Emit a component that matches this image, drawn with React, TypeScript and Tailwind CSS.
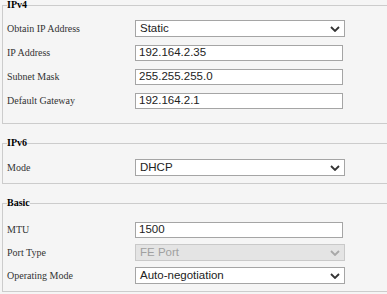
import React from "react";

const Chevron = ({ color }: { color: string }) => (
  <svg width="10" height="6" viewBox="0 0 10 6" className="shrink-0">
    <polyline points="1,1 5,5 9,1" fill="none" stroke={color} strokeWidth="1.8" />
  </svg>
);

const Label = ({ children }: { children: React.ReactNode }) => (
  <div className="w-[128px] shrink-0 text-[10px] text-[#333333] font-['Liberation_Serif',serif] leading-none">
    {children}
  </div>
);

const Select = ({ value, disabled }: { value: string; disabled?: boolean }) => (
  <div
    className={
      disabled
        ? "h-[17px] w-[210px] border border-[#c9c9c9] bg-[#e4e4e4] flex items-center justify-between pl-[4px] pr-[4px] text-[11.5px] text-[#a0a0a0] font-['Liberation_Sans',sans-serif]"
        : "h-[17px] w-[210px] border border-[#a5a5a5] bg-white flex items-center justify-between pl-[4px] pr-[4px] text-[11.5px] text-[#222222] font-['Liberation_Sans',sans-serif]"
    }
  >
    <span className="leading-none">{value}</span>
    <Chevron color={disabled ? "#a8a8a8" : "#333333"} />
  </div>
);

const Input = ({ value }: { value: string }) => (
  <div className="h-[16px] w-[208px] border border-[#a5a5a5] bg-white flex items-center pl-[3px] text-[11.5px] text-[#222222] font-['Liberation_Sans',sans-serif]">
    <span className="leading-none">{value}</span>
  </div>
);

const Row = ({ label, children }: { label: string; children: React.ReactNode }) => (
  <div className="flex items-center h-[17px]">
    <Label>{label}</Label>
    {children}
  </div>
);

const Legend = ({ children }: { children: React.ReactNode }) => (
  <legend className="text-[10px] leading-[10px] font-bold text-black font-['Liberation_Serif',serif]">
    {children}
  </legend>
);

export default function App() {
  return (
    <div className="w-[387px] h-[294px] overflow-hidden bg-[#f5f5f5]">
      <fieldset className="ml-[2px] w-[420px] border border-[#cccccc] pl-[4px]">
        <Legend>IPv4</Legend>
        <div className="flex flex-col gap-[7px] pt-[10px] pb-[14px]">
          <Row label="Obtain IP Address">
            <Select value="Static" />
          </Row>
          <Row label="IP Address">
            <Input value="192.164.2.35" />
          </Row>
          <Row label="Subnet Mask">
            <Input value="255.255.255.0" />
          </Row>
          <Row label="Default Gateway">
            <Input value="192.164.2.1" />
          </Row>
        </div>
      </fieldset>
      <fieldset className="ml-[2px] mt-[14px] w-[420px] border border-[#cccccc] pl-[4px]">
        <Legend>IPv6</Legend>
        <div className="flex flex-col pt-[11px] pb-[7px]">
          <Row label="Mode">
            <Select value="DHCP" />
          </Row>
        </div>
      </fieldset>
      <fieldset className="ml-[2px] mt-[14px] w-[420px] border border-[#cccccc] pl-[4px]">
        <Legend>Basic</Legend>
        <div className="flex flex-col gap-[6px] pt-[13px] pb-[7px]">
          <Row label="MTU">
            <Input value="1500" />
          </Row>
          <Row label="Port Type">
            <Select value="FE Port" disabled />
          </Row>
          <Row label="Operating Mode">
            <Select value="Auto-negotiation" />
          </Row>
        </div>
      </fieldset>
    </div>
  );
}
